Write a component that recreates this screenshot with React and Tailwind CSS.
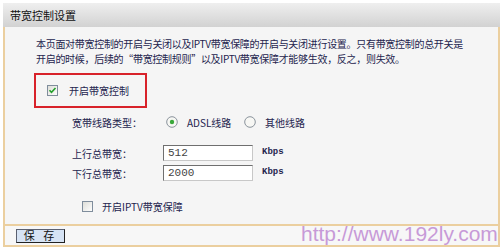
import React from "react";

const FONT = { fontFamily: '"Noto Sans CJK SC", "Liberation Sans", sans-serif' };

function CheckBox({ checked }) {
  return (
    <svg width="11" height="11" viewBox="0 0 11 11" className="shrink-0">
      <defs>
        <linearGradient id={checked ? "cbg1" : "cbg2"} x1="0" y1="0" x2="1" y2="1">
          <stop offset="0" stopColor="#dcdcd6" />
          <stop offset="1" stopColor="#ffffff" />
        </linearGradient>
      </defs>
      <rect x="0.5" y="0.5" width="10" height="10" fill={`url(#${checked ? "cbg1" : "cbg2"})`} stroke="#7f8d9c" />
      {checked && (
        <path d="M2.5 5.2 L4.5 7.3 L8.5 3" fill="none" stroke="#22a02a" strokeWidth="1.6" />
      )}
    </svg>
  );
}

function Radio({ checked }) {
  return (
    <svg width="12" height="12" viewBox="0 0 12 12" className="shrink-0">
      <circle cx="6" cy="6" r="5.3" fill="#f7f7f4" stroke="#8a939c" strokeWidth="1" />
      {checked && <circle cx="6" cy="6" r="2.2" fill="#3aa83a" />}
    </svg>
  );
}

function Field({ value }) {
  return (
    <div className="w-[90px] h-[16px] border border-[#6f6f6f] border-r-[#c8c8c8] border-b-[#c8c8c8] bg-white flex items-center pl-[4px] text-[11px] text-[#444]" style={{ fontFamily: '"Liberation Mono", monospace' }}>
      {value}
    </div>
  );
}

export default function App() {
  return (
    <div className="w-[504px] h-[250px] bg-white relative overflow-hidden text-[10px] text-[#24244e]" style={FONT}>
      <div className="ml-[3px] mt-[3px] w-[497px]">
        <div className="h-[24px] bg-gradient-to-b from-[#efefef] to-[#d2d2d2] flex items-center pl-[7px] text-[11px] text-[#111]">
          带宽控制设置
        </div>
        <div className="h-[199px] bg-[#f5f5f5] border-l-[2px] border-r-[2px] border-b-[2px] border-[#ebcf9f] flex flex-col">
          <div className="pt-[9px] pl-[31px] leading-[15px] whitespace-nowrap tracking-[-0.3px]">
            本页面对带宽控制的开启与关闭以及IPTV带宽保障的开启与关闭进行设置。只有带宽控制的总开关是
            <br />
            开启的时候，后续的“带宽控制规则”以及IPTV带宽保障才能够生效，反之，则失效。
          </div>
          <div className="mt-[7px] ml-[29px] w-[113px] h-[35px] border-[2px] border-[#d8222a] flex items-center pl-[11px] gap-[11px]">
            <CheckBox checked />
            <span className="text-[10px]">开启带宽控制</span>
          </div>
          <div className="mt-[6px] h-[16px] flex items-center pl-[67px]">
            <span className="w-[94px]">宽带线路类型：</span>
            <Radio checked />
            <span className="ml-[9px] w-[57px]">ADSL线路</span>
            <Radio />
            <span className="ml-[9px]">其他线路</span>
          </div>
          <div className="mt-[15px] flex items-center pl-[67px]">
            <span className="w-[91px]">上行总带宽：</span>
            <Field value="512" />
            <span className="ml-[9px] text-[9px] font-bold" style={{ fontFamily: '"Liberation Mono", monospace' }}>Kbps</span>
          </div>
          <div className="mt-[4px] flex items-center pl-[67px]">
            <span className="w-[91px]">下行总带宽：</span>
            <Field value="2000" />
            <span className="ml-[9px] text-[9px] font-bold" style={{ fontFamily: '"Liberation Mono", monospace' }}>Kbps</span>
          </div>
          <div className="mt-[17px] h-[16px] flex items-center pl-[77px] gap-[9px]">
            <CheckBox />
            <span>开启IPTV带宽保障</span>
          </div>
        </div>
        <div className="h-[21px] bg-[#f7f7f7] border-l-[2px] border-r-[2px] border-b-[2px] border-[#ebcf9f] flex items-center pl-[11px]">
          <div className="w-[49px] h-[14px] bg-[#d6e3f4] border border-[#5a6070] border-r-[#222] border-b-[#222] flex items-center justify-center text-[11px] text-[#111] leading-none tracking-[3px]">
            保 存
          </div>
        </div>
      </div>
      <div className="absolute left-[301px] top-[221px] text-[21px] leading-[26px] text-[#c79ad8]" style={{ fontFamily: '"Liberation Sans", Arial, sans-serif' }}>
        http://www.192ly.com
      </div>
    </div>
  );
}
